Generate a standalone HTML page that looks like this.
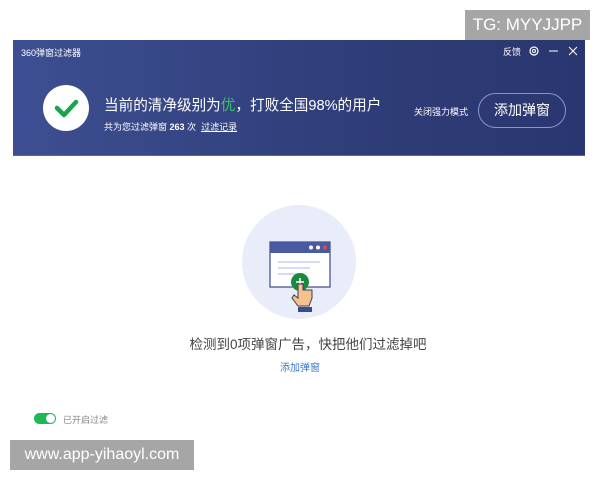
<!DOCTYPE html>
<html><head><meta charset="utf-8"><style>
body{margin:0;width:600px;height:480px;background:#fff;position:relative;overflow:hidden;font-family:"Liberation Sans","Noto Sans CJK SC",sans-serif;}
.a{position:absolute;}
</style></head><body>
<div class="a" style="left:465px;top:10px;width:125px;height:30px;background:#a6a6a6;color:#fff;font-size:17px;line-height:30px;text-align:center;">TG: MYYJJPP</div>
<div class="a" style="left:13px;top:40px;width:572px;height:115px;background:linear-gradient(90deg,#3d4f92,#2f3d78 60%,#2a366f);border-bottom:1px solid #5466b0"></div>
<div class="a" style="left:21px;top:46px;color:#fff;font-size:9px;">360弹窗过滤器</div>
<div class="a" style="left:503px;top:45px;color:#fff;font-size:9px;">反馈</div>
<svg class="a" style="left:528px;top:45px" width="50" height="12"><circle cx="6" cy="6" r="4" fill="none" stroke="#fff" stroke-width="1.2"/><circle cx="6" cy="6" r="1.5" fill="none" stroke="#fff"/><line x1="21" y1="6" x2="30" y2="6" stroke="#fff"/><path d="M41 2l8 8M49 2l-8 8" stroke="#fff"/></svg>
<div class="a" style="left:43px;top:85px;width:46px;height:46px;border-radius:50%;background:#fff;"></div>
<svg class="a" style="left:43px;top:85px" width="46" height="46"><path d="M14 23l7 7 12-13" fill="none" stroke="#1aa24f" stroke-width="4.5" stroke-linecap="round" stroke-linejoin="round"/></svg>
<div class="a" style="left:104px;top:94px;color:#fff;font-size:14.6px;">当前的清净级别为<span style="color:#3bc16a">优</span>，打败全国98%的用户</div>
<div class="a" style="left:104px;top:120px;color:#fff;font-size:9px;">共为您过滤弹窗 <b>263</b> 次 &nbsp;<u>过滤记录</u></div>
<div class="a" style="left:414px;top:105px;color:#fff;font-size:9px;">关闭强力模式</div>
<div class="a" style="left:478px;top:93px;width:86px;height:33px;border:1px solid #8a96c8;border-radius:18px;color:#fff;font-size:14px;line-height:33px;text-align:center;">添加弹窗</div>
<div class="a" style="left:242px;top:205px;width:114px;height:114px;border-radius:50%;background:#e9ecf9;"></div>
<svg class="a" style="left:240px;top:230px" width="120" height="100">
<rect x="30" y="12" width="60" height="45" fill="#fff" stroke="#3c4a8a" stroke-width="1.2"/>
<rect x="30" y="12" width="60" height="11" fill="#4a5aa0"/>
<circle cx="71" cy="17.5" r="2" fill="#fff"/><circle cx="78" cy="17.5" r="2" fill="#fff"/><circle cx="85" cy="17.5" r="2" fill="#e04b4b"/>
<line x1="38" y1="32" x2="80" y2="32" stroke="#c8cdf0" stroke-width="1.5"/><line x1="38" y1="38" x2="70" y2="38" stroke="#c8cdf0" stroke-width="1.5"/><line x1="38" y1="44" x2="64" y2="44" stroke="#c8cdf0" stroke-width="1.5"/>
<circle cx="60" cy="52" r="9" fill="#1a8a3e"/><path d="M56 52h8M60 48v8" stroke="#fff" stroke-width="1.5"/>
<path d="M58 54v14l-4-3-2 3 6 8h11l3-8v-8h-9v-6z" fill="#f4c28a" stroke="#3c3c5a" stroke-width="1"/>
<rect x="58" y="77" width="14" height="5" fill="#3c4a8a"/>
</svg>
<div class="a" style="left:0;width:600px;top:333px;text-align:center;color:#444;font-size:13.5px;padding-left:16px;box-sizing:border-box;">检测到0项弹窗广告，快把他们过滤掉吧</div>
<div class="a" style="left:0;width:600px;top:359px;text-align:center;color:#3a78d0;font-size:10px;">添加弹窗</div>
<div class="a" style="left:34px;top:413px;width:22px;height:11px;border-radius:6px;background:#1db954;"></div>
<div class="a" style="left:46px;top:414px;width:9px;height:9px;border-radius:50%;background:#fff;"></div>
<div class="a" style="left:63px;top:413px;color:#888;font-size:9px;">已开启过滤</div>
<div class="a" style="left:10px;top:440px;width:184px;height:30px;background:#a6a6a6;color:#fff;font-size:16px;line-height:30px;text-align:center;">www.app-yihaoyl.com</div>
</body></html>
